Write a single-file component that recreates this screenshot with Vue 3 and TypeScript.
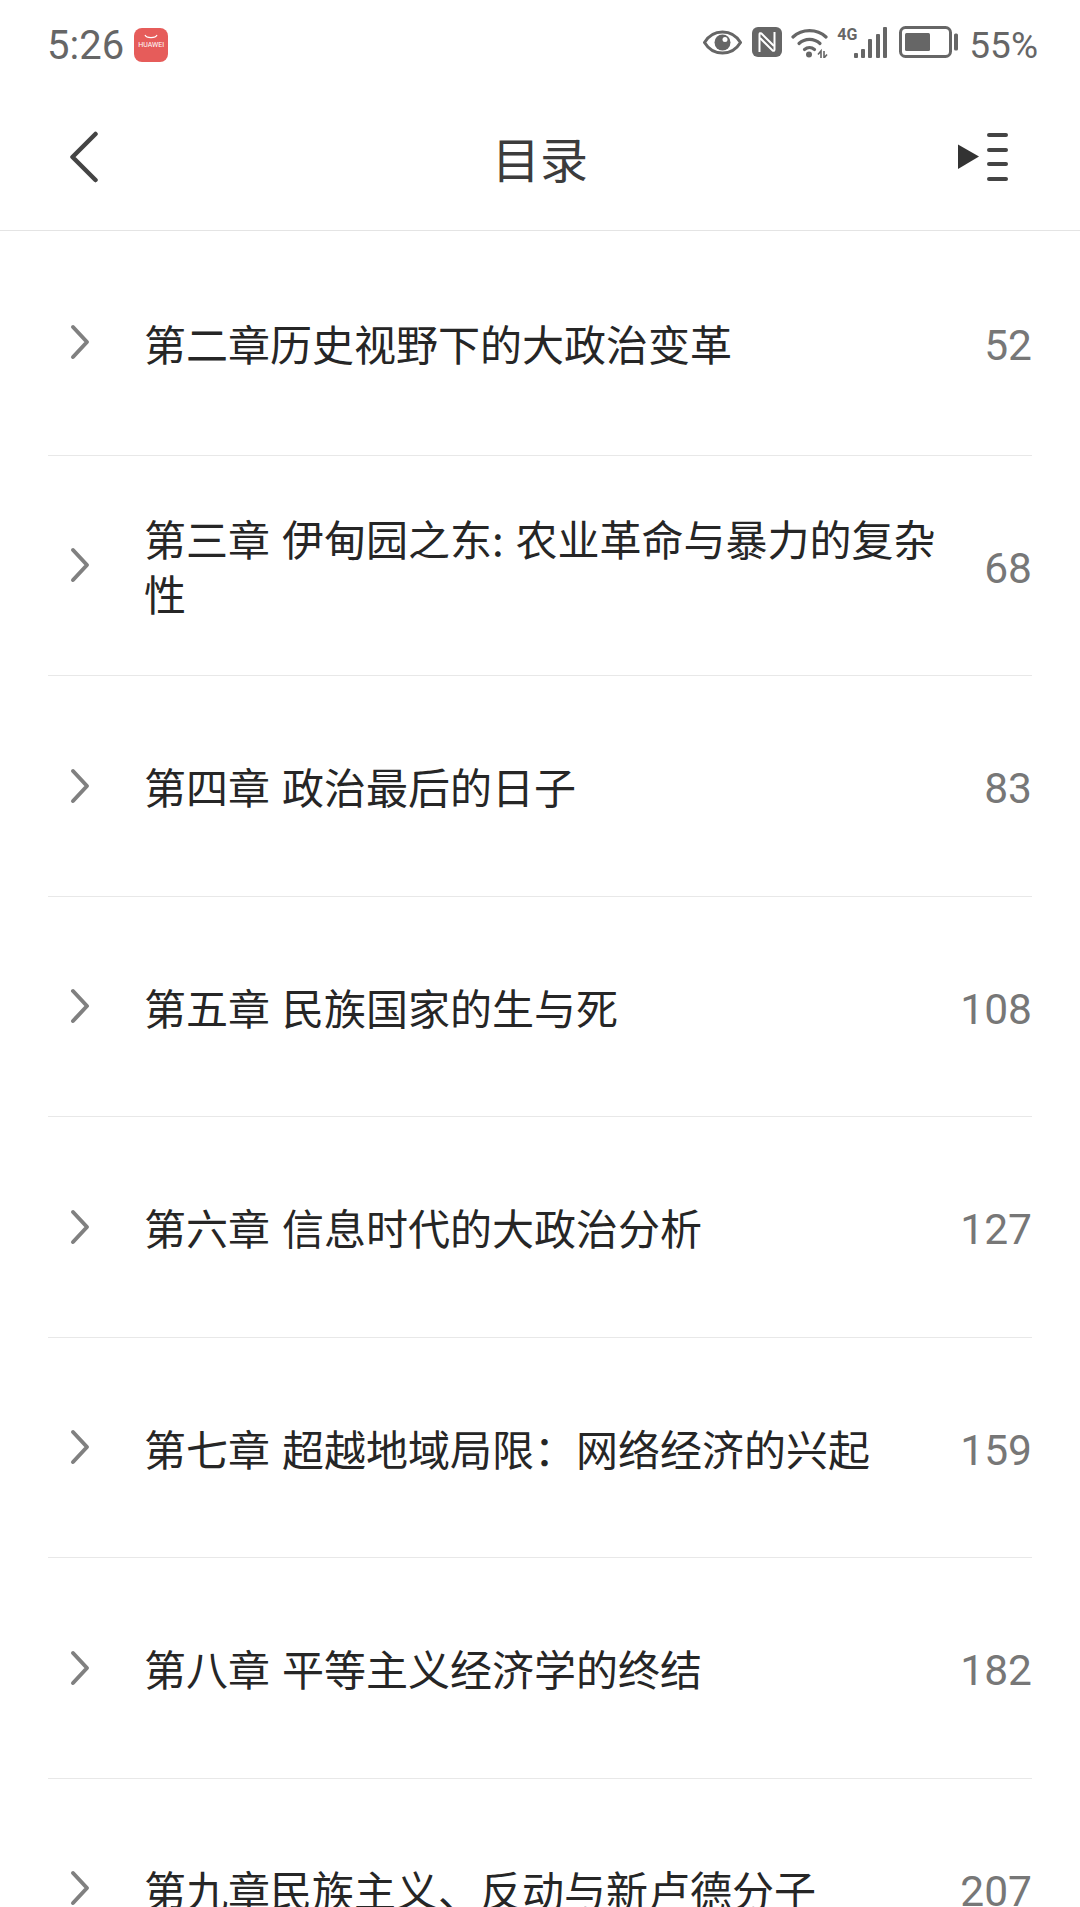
<script setup lang="ts">
interface Chapter {
  title: string
  page: number
}

const chapters: Chapter[] = [
  { title: '第二章历史视野下的大政治变革', page: 52 },
  { title: '第三章 伊甸园之东: 农业革命与暴力的复杂性', page: 68 },
  { title: '第四章 政治最后的日子', page: 83 },
  { title: '第五章 民族国家的生与死', page: 108 },
  { title: '第六章 信息时代的大政治分析', page: 127 },
  { title: '第七章 超越地域局限：网络经济的兴起', page: 159 },
  { title: '第八章 平等主义经济学的终结', page: 182 },
  { title: '第九章民族主义、反动与新卢德分子', page: 207 },
]
</script>

<template>
  <div class="page">
    <!-- status bar -->
    <div class="status">
      <div class="status-left">
        <span class="time">5:26</span>
        <div class="store">
          <svg class="smile" width="14" height="6" viewBox="0 0 14 6">
            <path d="M1 1c1.500 3.500 10.500 3.500 12 0" fill="none" stroke="#fff" stroke-width="1.200" />
          </svg>
          <span class="store-name">HUAWEI</span>
        </div>
      </div>
      <div class="status-right">
        <svg class="eye" width="39" height="25" viewBox="0 0 39 25">
          <path d="M1.500 12.500C6 5 12 2 19.500 2S33 5 37.500 12.500C33 20 27 23 19.500 23S6 20 1.500 12.500z" fill="none" stroke="#666" stroke-width="3" />
          <circle cx="19.500" cy="12.500" r="8" fill="#666" />
          <circle cx="22" cy="9.500" r="2.500" fill="#fff" />
        </svg>
        <svg class="nfc" width="30" height="30" viewBox="0 0 30 30">
          <rect width="30" height="30" rx="6" fill="#666" />
          <g fill="none" stroke="#fff" stroke-width="2">
            <path d="M7.500 25V7.500q0-2 2-1L22 19" />
            <path d="M22.500 5v17.500q0 2-2 1L8 11" />
          </g>
        </svg>
        <svg class="wifi" width="37" height="31" viewBox="0 0 37 31">
          <g fill="none" stroke="#666" stroke-width="3.200" stroke-linecap="round">
            <path d="M2 10C11 1.500 26 1.500 35 10" />
            <path d="M8 16.500C14 11 23 11 29 16.500" />
            <path d="M13.500 22.500c3-2.500 7-2.500 10 0" />
          </g>
          <circle cx="18" cy="27.500" r="3" fill="#666" />
          <g fill="none" stroke="#666" stroke-width="1.600">
            <path d="M30 31v-7l-3 3.500M33 24v7l3-3.500" />
          </g>
        </svg>
        <div class="cell">
          <span class="net">4G</span>
          <svg class="bars" width="33" height="31" viewBox="0 0 33 31">
            <g fill="#666">
              <rect x="0" y="26" width="4" height="5" rx="1" />
              <rect x="7" y="22" width="4" height="9" rx="1" />
              <rect x="14" y="12" width="4" height="19" rx="1" />
              <rect x="22" y="7" width="4" height="24" rx="1" />
              <rect x="29" y="0" width="4" height="31" rx="1" />
            </g>
          </svg>
        </div>
        <svg class="battery" width="60" height="32" viewBox="0 0 60 32">
          <rect x="1.500" y="1.500" width="50" height="29" rx="5" fill="none" stroke="#666" stroke-width="3" />
          <rect x="6" y="7" width="25" height="18" rx="1.500" fill="#666" />
          <rect x="55" y="7.500" width="4" height="17" rx="1.500" fill="#666" />
        </svg>
        <span class="percent">55%</span>
      </div>
    </div>

    <!-- title bar -->
    <header class="bar">
      <svg class="back" width="30" height="52" viewBox="0 0 30 52">
        <path d="M26.500 3 3.500 26l23 23" fill="none" stroke="#444" stroke-width="4.500" stroke-linecap="round" stroke-linejoin="round" />
      </svg>
      <h1 class="title">目录</h1>
      <svg class="outline" width="52" height="48" viewBox="0 0 52 48">
        <path d="M2 11.500 23 23.500 2 36z" fill="#333" />
        <g stroke="#444" stroke-width="4" stroke-linecap="round">
          <path d="M33 2h17M33 17h17M33 31h17M33 46h17" />
        </g>
      </svg>
    </header>

    <!-- chapter list -->
    <ul class="list">
      <li v-for="c in chapters" :key="c.page" class="row">
        <svg class="arrow" width="20" height="36" viewBox="0 0 20 36">
          <path d="M3 3l14 15L3 33" fill="none" stroke="#808080" stroke-width="4" stroke-linecap="round" stroke-linejoin="round" />
        </svg>
        <span class="name">{{ c.title }}</span>
        <span class="num">{{ c.page }}</span>
      </li>
    </ul>
  </div>
</template>

<style>
html,
body {
  margin: 0;
  background: #fff;
}
</style>

<style scoped>
.page {
  width: 1080px;
  height: 1907px;
  overflow: hidden;
  background: #fff;
  font-family: Roboto, "Noto Sans CJK SC", sans-serif;
}

.status {
  height: 90px;
  padding: 0 42px 0 47px;
  display: flex;
  align-items: center;
  justify-content: space-between;
  color: #666;
}

.status-left {
  display: flex;
  align-items: center;
  gap: 10px;
}

.time {
  font-size: 40px;
}

.store {
  width: 34px;
  height: 34px;
  border-radius: 8px;
  background: #e65c5a;
  display: flex;
  flex-direction: column;
  align-items: center;
  padding-top: 6px;
  box-sizing: border-box;
}

.smile {
  display: block;
}

.store-name {
  font-size: 7px;
  line-height: 10px;
  color: #fff;
}

.status-right {
  display: flex;
  align-items: center;
  margin-bottom: 6px;
}

.eye {
  margin-right: 10px;
}

.nfc {
  margin-right: 9px;
}

.wifi {
  margin-right: 9px;
}

.cell {
  display: flex;
  align-items: flex-start;
  height: 31px;
  margin-right: 12px;
}

.net {
  font-family: "Liberation Sans Narrow", Roboto, sans-serif;
  font-size: 16px;
  line-height: 16px;
  font-weight: 700;
  width: 17px;
  flex: none;
}

.bars {
  flex: none;
}

.battery {
  margin-right: 10px;
}

.percent {
  margin-top: 6px;
  font-size: 37px;
}

.bar {
  height: 140px;
  padding: 0 72px 0 69px;
  display: flex;
  align-items: center;
  justify-content: space-between;
  border-bottom: 1px solid #e4e4e4;
}

.back,
.outline {
  margin-bottom: 6px;
}

.title {
  margin: 0 0 7px 25px;
  font-size: 48px;
  font-weight: 400;
  color: #3c3c3c;
  font-family: "Noto Sans CJK SC", sans-serif;
}

.list {
  list-style: none;
  margin: 0;
  padding: 4px 48px 0;
}

.row {
  height: 220.5px;
  box-sizing: border-box;
  border-bottom: 1.500px solid #e8e8e8;
  display: flex;
  align-items: center;
}

.row:first-child {
  padding-bottom: 5px;
}

.arrow {
  flex: none;
  margin-left: 22px;
}

.name {
  flex: 1;
  margin: 0 36px 0 54px;
  font-size: 42px;
  line-height: 55px;
  word-spacing: 2.500px;
  color: #262626;
  font-family: "Noto Sans CJK SC", sans-serif;
}

.num {
  flex: none;
  margin-top: 6px;
  font-size: 42.500px;
  color: #777;
}
</style>
